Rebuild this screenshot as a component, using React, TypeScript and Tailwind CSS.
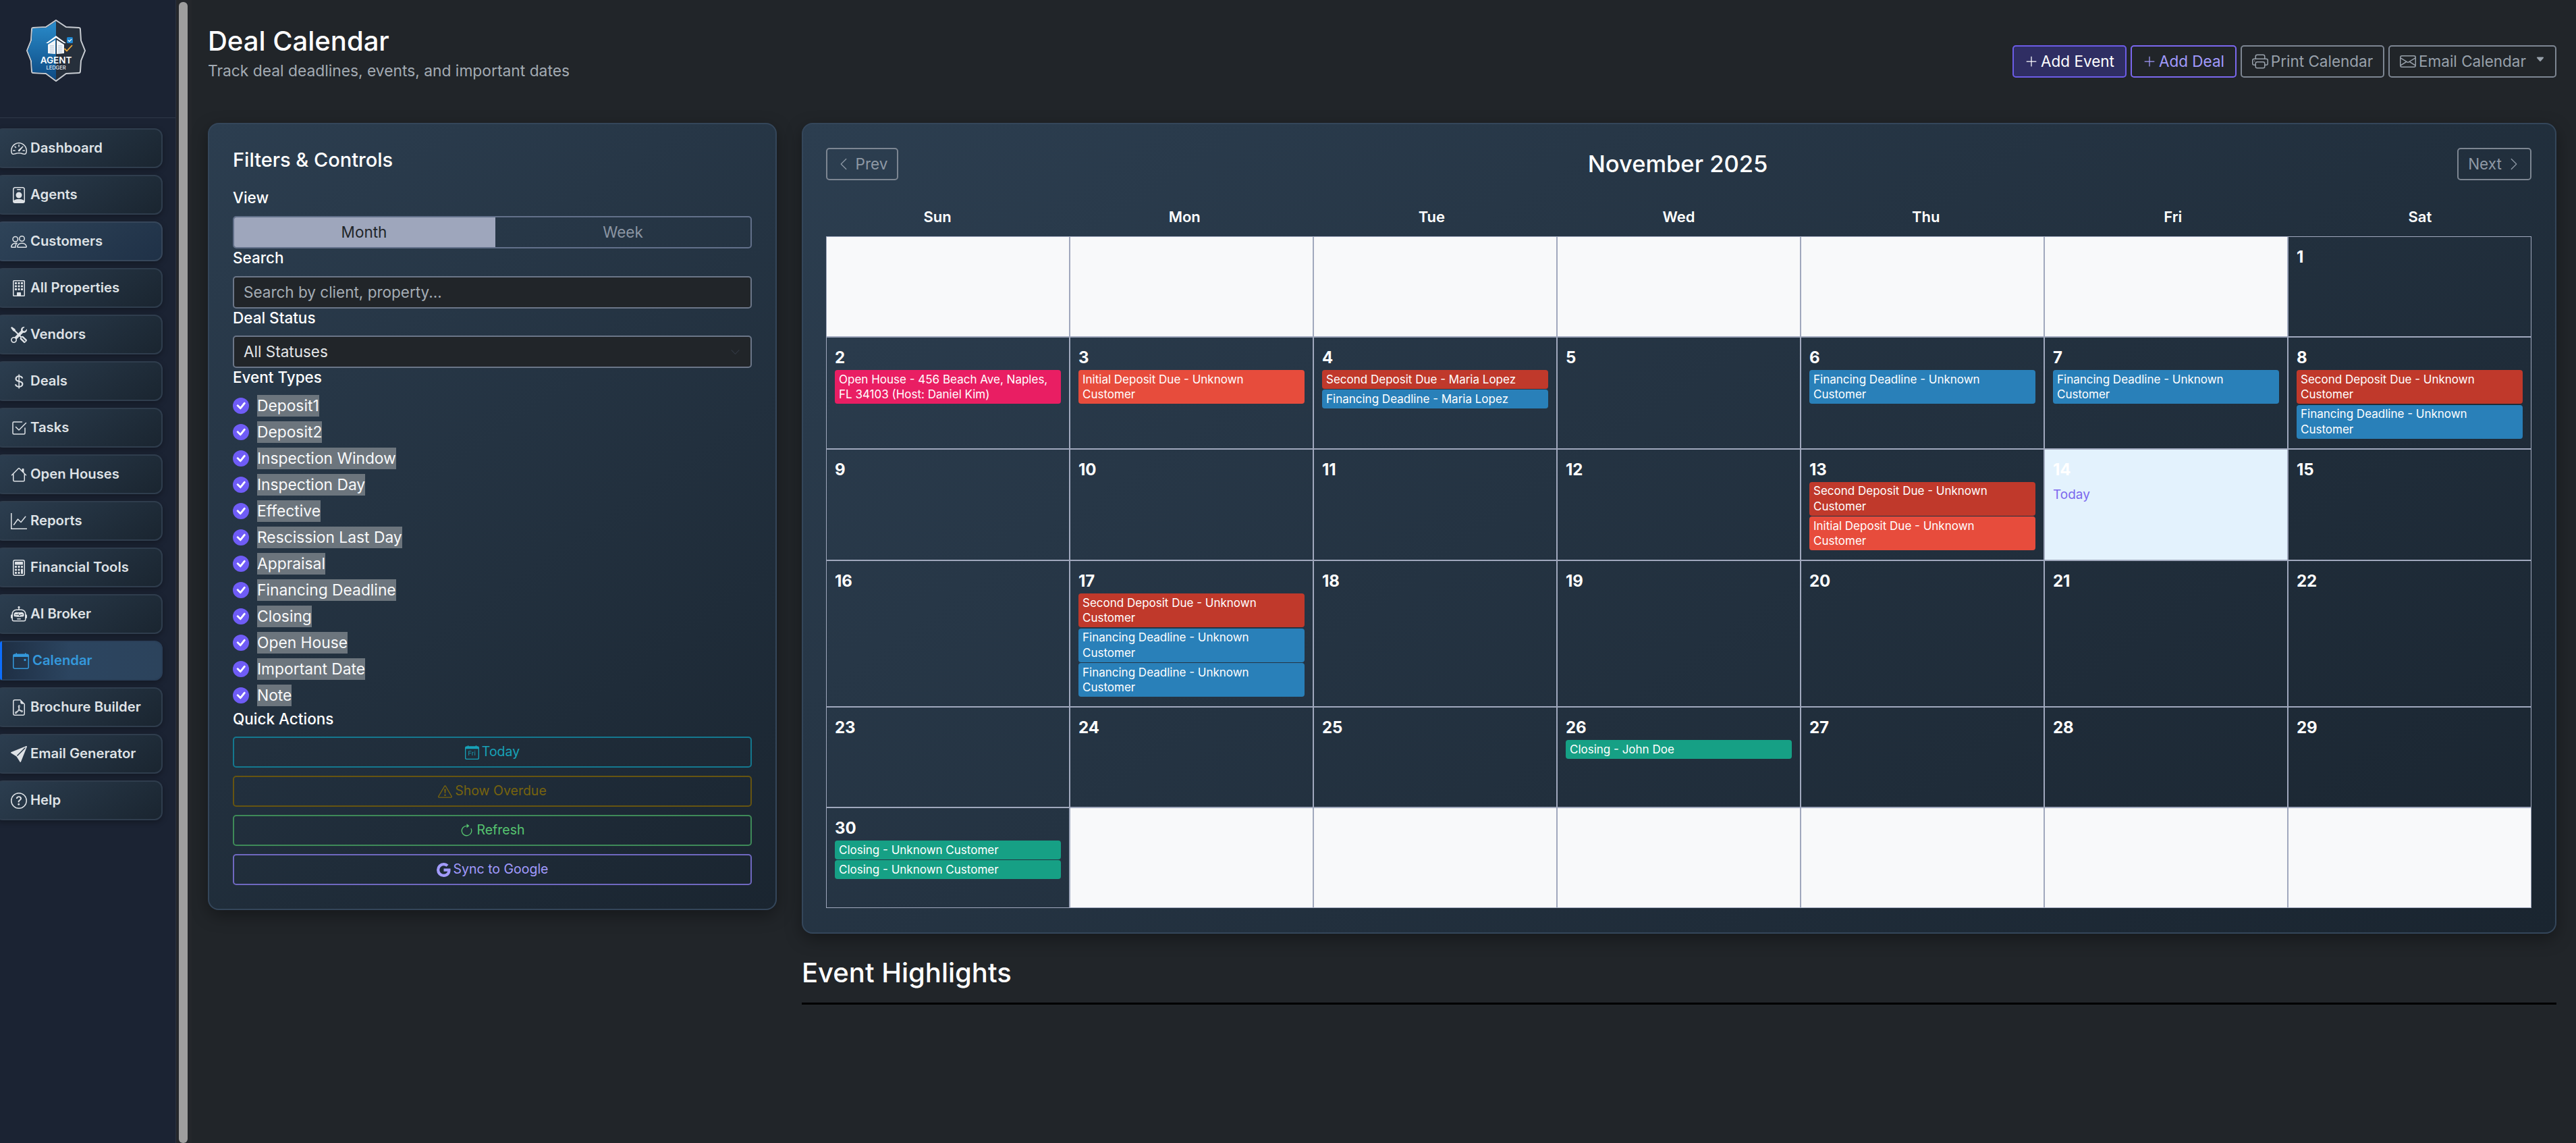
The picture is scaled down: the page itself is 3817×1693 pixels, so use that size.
import React from "react";
import {
  BsSpeedometer2, BsPersonBadge, BsPeople, BsBuilding, BsTools, BsCurrencyDollar, BsCheck2Square,
  BsHouse, BsGraphUp, BsCalculator, BsRobot, BsCalendarEvent, BsFileEarmarkPdf, BsSendFill, BsQuestionCircle,
  BsCalendarDay, BsExclamationTriangle, BsArrowClockwise, BsGoogle, BsPlusLg, BsPrinter, BsEnvelope,
  BsChevronLeft, BsChevronRight, BsChevronDown, BsCheck, BsCaretDownFill,
} from "react-icons/bs";

const nav: [string, React.ComponentType<{ className?: string }>][] = [
  ["Dashboard", BsSpeedometer2], ["Agents", BsPersonBadge], ["Customers", BsPeople], ["All Properties", BsBuilding],
  ["Vendors", BsTools], ["Deals", BsCurrencyDollar], ["Tasks", BsCheck2Square], ["Open Houses", BsHouse],
  ["Reports", BsGraphUp], ["Financial Tools", BsCalculator], ["AI Broker", BsRobot], ["Calendar", BsCalendarEvent],
  ["Brochure Builder", BsFileEarmarkPdf], ["Email Generator", BsSendFill], ["Help", BsQuestionCircle],
];

const types = ["Deposit1", "Deposit2", "Inspection Window", "Inspection Day", "Effective", "Rescission Last Day", "Appraisal", "Financing Deadline", "Closing", "Open House", "Important Date", "Note"];

type Ev = [string, string];
const O = "bg-[#e91e63]", I = "bg-[#e74c3c]", S = "bg-[#c0392b]", F = "bg-[#2980b9]", C = "bg-[#16a085]";
const events: Record<number, Ev[]> = {
  2: [["Open House - 456 Beach Ave, Naples, FL 34103 (Host: Daniel Kim)", O]],
  3: [["Initial Deposit Due - Unknown Customer", I]],
  4: [["Second Deposit Due - Maria Lopez", S], ["Financing Deadline - Maria Lopez", F]],
  6: [["Financing Deadline - Unknown Customer", F]],
  7: [["Financing Deadline - Unknown Customer", F]],
  8: [["Second Deposit Due - Unknown Customer", S], ["Financing Deadline - Unknown Customer", F]],
  13: [["Second Deposit Due - Unknown Customer", S], ["Initial Deposit Due - Unknown Customer", I]],
  17: [["Second Deposit Due - Unknown Customer", S], ["Financing Deadline - Unknown Customer", F], ["Financing Deadline - Unknown Customer", F]],
  26: [["Closing - John Doe", C]],
  30: [["Closing - Unknown Customer", C], ["Closing - Unknown Customer", C]],
};

const cells: (number | null)[] = [null, null, null, null, null, null, ...Array.from({ length: 30 }, (_, i) => i + 1), null, null, null, null, null, null];

function Logo() {
  return (
    <svg viewBox="0 0 88 92" className="w-[88px] h-[92px]">
      <defs>
        <linearGradient id="lb" x1="0" y1="0" x2="0" y2="1">
          <stop offset="0" stopColor="#2a8ccb" />
          <stop offset="1" stopColor="#0d4a83" />
        </linearGradient>
      </defs>
      <path d="M44 1 L59 11 L78 12 Q80 12 80 15 L81 31 L87 46 L81 61 L80 76 Q80 79 78 79 L59 80 L44 91 L29 80 L10 79 Q8 79 8 76 L7 61 L1 46 L7 31 L8 15 Q8 12 10 12 L29 11 Z" fill="#262f3b" stroke="#c8ccd2" strokeWidth="2" />
      <path d="M44 2.5 L29.5 12 L10 13 Q9 13 9 15 L8 31 L2 46 L8 61 L9 76 Q9 78 10 78 L29.5 79 L44 89.5 Z" fill="url(#lb)" />
      <path d="M29 35 L44 24 L59 35 L56 35 L44 27 L32 35 Z" fill="#fff" />
      <path d="M32 37 L43 30 L43 51 L32 50 Z M45 30 L56 37 L56 50 L45 51 Z" fill="#f2f5f8" />
      <path d="M35 39h6M35 42h6M35 45h6M35 48h6M47 39h6M47 42h6M47 45h6M47 48h6" stroke="#a9c0d6" strokeWidth="1" />
      <rect x="60" y="26" width="9" height="9" rx="1.5" fill="#1e86cf" />
      <path d="M61.8 30.4 L63.8 32.4 L67.2 28.8" stroke="#fff" strokeWidth="1.2" fill="none" />
      <path d="M56.5 43 L60 46.5 L68 38" stroke="#eda93b" strokeWidth="1.8" fill="none" />
      <text x="44" y="65" textAnchor="middle" fill="#fff" fontSize="13.5" fontWeight="600" fontFamily="Inter, sans-serif">AGENT</text>
      <text x="44" y="74" textAnchor="middle" fill="#e6ebf1" fontSize="7.5" fontWeight="500" fontFamily="Inter, sans-serif">LEDGER</text>
    </svg>
  );
}

function Label({ children }: { children: React.ReactNode }) {
  return <div className="text-[22.5px] leading-[26px] font-medium text-white">{children}</div>;
}

function Quick({ icon: Icon, text, cls }: { icon: React.ComponentType<{ className?: string }>; text: string; cls: string }) {
  return (
    <button className={`w-full h-[46px] rounded-[5px] border-2 flex items-center justify-center gap-[4px] text-[19.5px] ${cls}`}>
      <Icon className="w-[21px] h-[21px]" />
      {text}
    </button>
  );
}

function TopBtn({ children, cls }: { children: React.ReactNode; cls: string }) {
  return <button className={`h-[48px] rounded-[5px] border-2 flex items-center justify-center gap-[4px] text-[22.5px] ${cls}`}>{children}</button>;
}

export default function App() {
  return (
    <div className="flex min-h-[1693px] bg-[#212529] font-['Inter',sans-serif] overflow-hidden">
      <aside className="w-[284px] shrink-0 flex bg-[#1b2333]">
        <div className="w-[260px] shrink-0 flex flex-col">
          <div className="h-[175px] border-b border-[#2f3848] pl-[39px] pt-[29px]">
            <Logo />
          </div>
          <nav className="flex flex-col gap-[10px] pt-[15px] pr-[19px] -ml-[8px]">
            {nav.map(([name, Icon]) => {
              const active = name === "Calendar";
              const hover = name === "Customers";
              return (
                <a key={name} className={`relative h-[59px] rounded-[12px] border-2 flex items-center gap-[5px] text-[20.3px] font-semibold shadow-[0_3px_8px_rgba(0,0,0,0.3)] ${active ? "border-[#2a3f58] bg-[linear-gradient(90deg,#1d2d42,#2c4560_45%,#2c435c)] text-[#3498db] pl-[25px]" : hover ? "border-[#36465a] bg-[linear-gradient(145deg,#2f4459,#1f3147)] text-[#dee2e6] pl-[22px]" : "border-[#2f3d4d] bg-[linear-gradient(145deg,#2c3e50,#1a2530)] text-[#dee2e6] pl-[22px]"}`}>
                  {active && <span className="absolute left-[6px] top-[-1px] bottom-[-1px] w-[3px] rounded-l-[10px] bg-[#0d6efd]" />}
                  <Icon className="w-[24px] h-[24px] shrink-0" />
                  <span>{name}</span>
                </a>
              );
            })}
          </nav>
        </div>
        <div className="w-[24px] shrink-0 bg-[#24272b] border-l border-[#2a3140] pl-[4px] pt-[3px]">
          <div className="w-[13px] h-[1690px] rounded-[6px] bg-[#9e9e9e]" />
        </div>
      </aside>

      <main className="flex-1 min-w-0 pl-[24px] pr-[29px] pt-[36px]">
        <header className="flex items-start justify-between h-[146px]">
          <div>
            <h1 className="text-[40px] leading-[50px] font-medium text-white">Deal Calendar</h1>
            <p className="text-[22.8px] leading-[30px] mt-[4px] text-[#a3abb3]">Track deal deadlines, events, and important dates</p>
          </div>
          <div className="flex gap-[6px] mt-[31px]">
            <TopBtn cls="w-[169px] bg-[#2f2e63] border-[#6c5ce7] text-white"><BsPlusLg className="w-[20px] h-[20px]" />Add Event</TopBtn>
            <TopBtn cls="w-[157px] border-[#7b68ee] text-[#a29bfe]"><BsPlusLg className="w-[20px] h-[20px]" />Add Deal</TopBtn>
            <TopBtn cls="w-[213px] border-[#7d8692] text-[#98a1ab]"><BsPrinter className="w-[24px] h-[24px]" />Print Calendar</TopBtn>
            <TopBtn cls="w-[249px] border-[#7d8692] text-[#98a1ab]"><BsEnvelope className="w-[24px] h-[24px]" />Email Calendar<BsCaretDownFill className="w-[14px] h-[14px] ml-[10px] mb-[6px]" /></TopBtn>
          </div>
        </header>

        <div className="flex items-start gap-[37px]">
          <section className="w-[843px] shrink-0 h-[1166px] rounded-[16px] border-2 border-[#34465a] bg-[linear-gradient(145deg,#2c3e50,#1a2530)] shadow-[0_8px_24px_rgba(0,0,0,0.35)] px-[35px] pt-[35px]">
            <h2 className="text-[29px] leading-[36px] font-medium text-white">Filters &amp; Controls</h2>
            <div className="mt-[25px]"><Label>View</Label></div>
            <div className="flex h-[48px] mt-[14px] rounded-[5px] border-2 border-[#62708a] overflow-hidden text-[22.5px]">
              <div className="w-[389px] -my-[2px] -ml-[2px] bg-[#9ea6bc] text-[#212529] flex items-center justify-center">Month</div>
              <div className="flex-1 flex items-center justify-center text-[#8b95a3]">Week</div>
            </div>
            <div className="mt-[1px]"><Label>Search</Label></div>
            <div className="h-[48px] mt-[14px] rounded-[5px] border-2 border-[#6b7688] bg-[#212529] flex items-center pl-[14px] text-[22.5px] text-[#a5adb5]">Search by client, property...</div>
            <div className="mt-[1px]"><Label>Deal Status</Label></div>
            <div className="h-[48px] mt-[13px] rounded-[5px] border-2 border-[#6b7688] bg-[#212529] flex items-center justify-between pl-[14px] pr-[15px] text-[22.5px] text-[#e4e6e8]">All Statuses<BsChevronDown className="w-[15px] h-[15px] text-[#343a46]" /></div>
            <div className="mt-[1px]"><Label>Event Types</Label></div>
            <div className="mt-[13px] flex flex-col gap-[7px]">
              {types.map((t) => (
                <div key={t} className="flex items-center gap-[12px] h-[32px]">
                  <span className="w-[24px] h-[24px] rounded-full bg-[#6f5cf6] flex items-center justify-center text-white"><BsCheck className="w-[24px] h-[24px] stroke-white stroke-[0.6]" /></span>
                  <span className="bg-[#6c757d] text-[#f8f9fa] text-[22.8px] leading-[32px]">{t}</span>
                </div>
              ))}
            </div>
            <div className="mt-[6px]"><Label>Quick Actions</Label></div>
            <div className="mt-[13px] flex flex-col gap-[12px]">
              <Quick icon={BsCalendarDay} text="Today" cls="border-[#14788f] text-[#17a2b8]" />
              <Quick icon={BsExclamationTriangle} text="Show Overdue" cls="border-[#665410] text-[#77630e]" />
              <Quick icon={BsArrowClockwise} text="Refresh" cls="border-[#3e8a58] text-[#56c46f]" />
              <Quick icon={BsGoogle} text="Sync to Google" cls="border-[#6f68c0] text-[#a29bfe]" />
            </div>
          </section>

          <div className="flex-1 min-w-0">
            <section className="h-[1201px] rounded-[16px] border-2 border-[#34465a] bg-[linear-gradient(145deg,#2c3e50,#1a2530)] shadow-[0_8px_24px_rgba(0,0,0,0.35)] pl-[34px] pr-[35px] pt-[35px]">
              <div className="flex items-center justify-between h-[48px]">
                <button className="w-[107px] h-[48px] rounded-[5px] border-2 border-[#7d8692] text-[#8f99a5] text-[22.5px] flex items-center justify-center gap-[8px]"><BsChevronLeft className="w-[20px] h-[20px]" />Prev</button>
                <h3 className="text-[34.5px] font-medium text-white">November 2025</h3>
                <button className="w-[110px] h-[48px] rounded-[5px] border-2 border-[#7d8692] text-[#8f99a5] text-[22.5px] flex items-center justify-center gap-[8px]">Next<BsChevronRight className="w-[20px] h-[20px]" /></button>
              </div>
              <div className="grid grid-cols-7 -mx-[18px] mt-[38px] h-[45px] text-[22px] font-semibold text-white text-center">
                {["Sun", "Mon", "Tue", "Wed", "Thu", "Fri", "Sat"].map((d) => <div key={d}>{d}</div>)}
              </div>
              <div className="grid grid-cols-7">
                {cells.map((d, i) => {
                  if (d === null) return <div key={i} className="min-h-[149px] border border-[#a0a8bd] bg-[#f8f9fa]" />;
                  const today = d === 14;
                  return (
                    <div key={i} className={`min-h-[149px] border border-[#a0a8bd] pt-[11px] px-[12px] pb-[14px] ${today ? "bg-[#e3f2fd]" : ""}`}>
                      <div className="text-[24px] leading-[37px] font-bold text-white">{d}</div>
                      {today && <div className="text-[19px] leading-[26px] mt-[6px] text-[#7b68ee]">Today</div>}
                      <div className="flex flex-col gap-[1.5px]">
                        {(events[d] || []).map(([t, c], k) => (
                          <div key={k} className={`${c} rounded-[4px] pl-[6px] pr-[12px] py-[2.5px] text-[17px] leading-[22.5px] text-white`}>{t}</div>
                        ))}
                      </div>
                    </div>
                  );
                })}
              </div>
            </section>
            <h2 className="text-[40px] leading-[48px] font-medium text-white mt-[34px]">Event Highlights</h2>
            <div className="h-[3px] bg-black mt-[20px]" />
          </div>
        </div>
      </main>
    </div>
  );
}
